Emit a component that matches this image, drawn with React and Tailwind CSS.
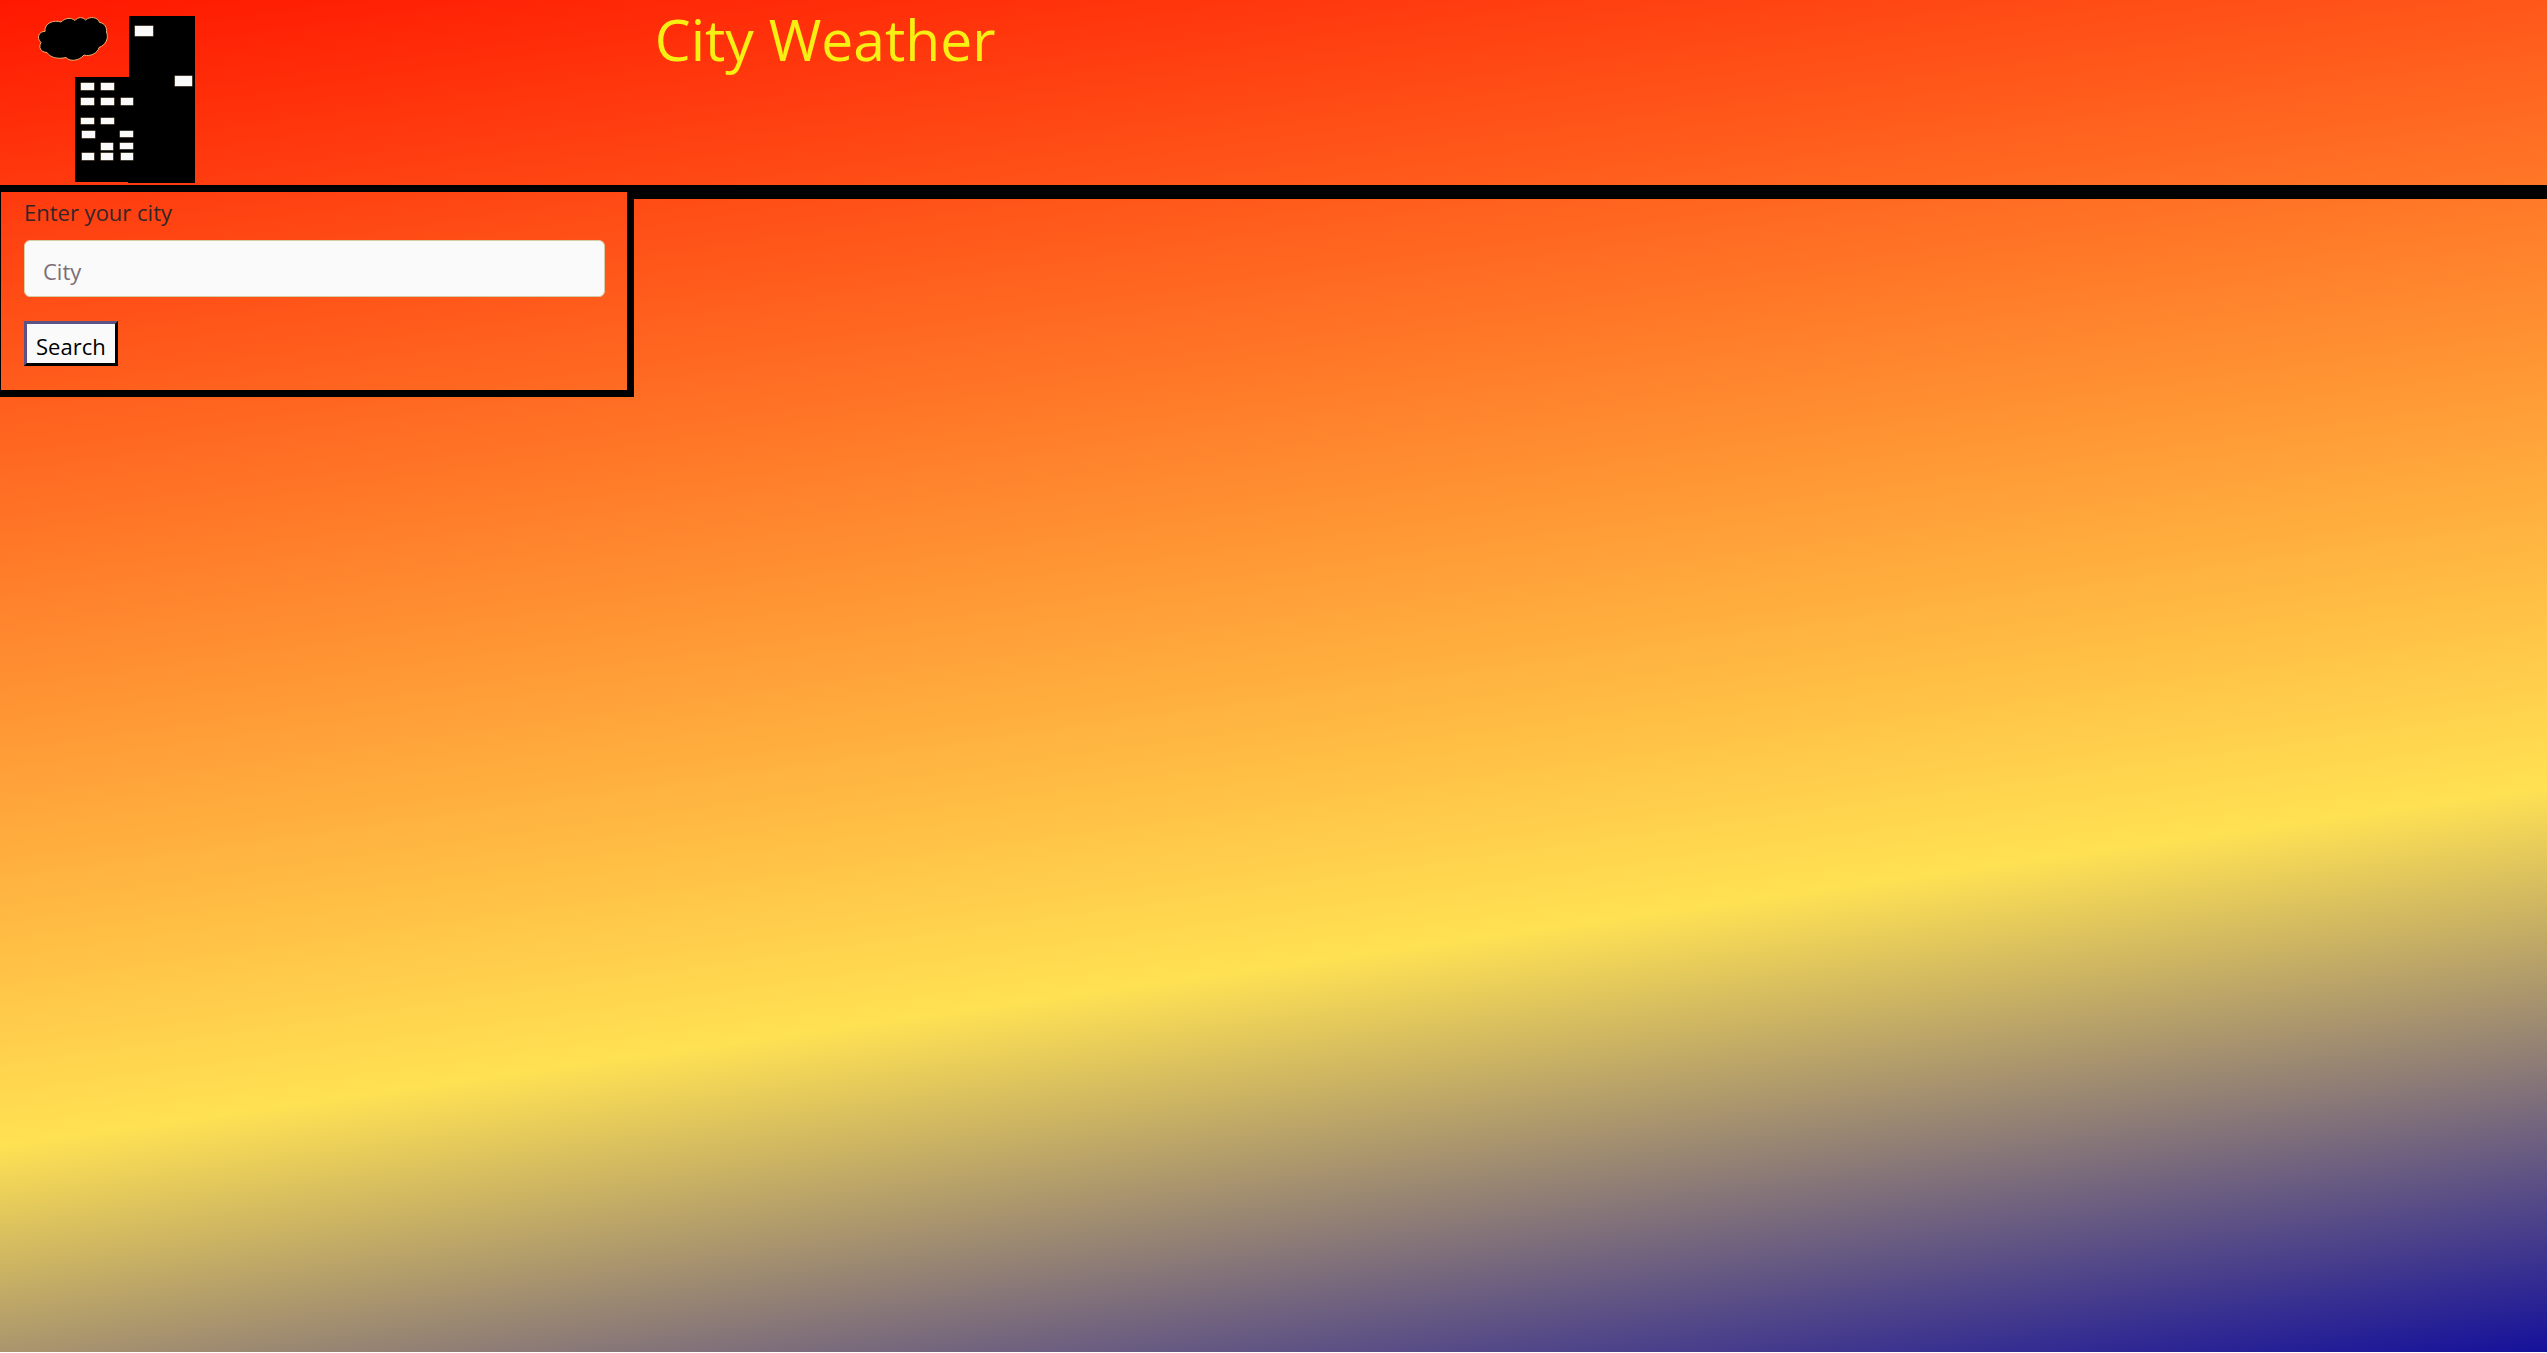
const windowsList = [
  [135, 26, 18, 10],
  [175, 76, 17, 10],
  [81, 83, 13, 7],
  [101, 83, 13, 7],
  [81, 98, 13, 7],
  [101, 98, 13, 7],
  [121, 98, 12, 7],
  [81, 118, 13, 6],
  [101, 118, 13, 6],
  [82, 131, 13, 7],
  [120, 131, 13, 6],
  [101, 143, 12, 7],
  [120, 143, 13, 6],
  [82, 153, 12, 7],
  [101, 153, 12, 7],
  [121, 153, 12, 7],
];

function Logo() {
  return (
    <svg width="200" height="185" viewBox="0 0 200 185" role="img" aria-label="City Weather logo" className="block">
      <path
        d="M45 31.5C44 23 54 19.500 61 22C65 18 71 17 75 20.500C78 16.500 83 17 85.500 20C90 16 98 17 99.500 22.500C105 23 107 28 106.500 32C109 38 106 45 99 47.500C98 53 90 57 84 55C79 61 70 62 66 57.500C58 59.500 50 57.500 47 52.500C40 52 38.500 47 41 42.500C36 38 39 31 45 31.500Z"
        fill="#000"
        stroke="#e8b070"
        strokeWidth="1"
      />
      <path d="M75 77H129V16H195V183H128V182H75Z" fill="#000" />
      {windowsList.map(([x, y, w, h]) => (
        <rect
          key={`${x}-${y}`}
          x={x}
          y={y}
          width={w}
          height={h}
          fill="#fafafa"
          stroke="#8a7d62"
          strokeWidth="1"
          paintOrder="stroke"
        />
      ))}
    </svg>
  );
}

export default function App() {
  return (
    <div className="h-screen bg-white pb-px font-['Open_Sans',sans-serif] text-[22px]">
      <div className="h-full bg-[linear-gradient(172deg,#ff1800_0%,#ffe153_67%,#15119b_100%)]">
        <header className="flex">
          <div className="w-1/4">
            <Logo />
          </div>
          <h1 className="pt-1 pl-[18px] text-[57px] leading-[70px] text-[#f8f013]">City Weather</h1>
        </header>
        <main className="flex items-start">
          <form
            className="w-[24.9%] border-y-[7px] border-r-[7px] border-l border-black pr-[22px] pb-6 pl-[23px]"
            onSubmit={(e) => e.preventDefault()}
          >
            <label htmlFor="city" className="block pt-0.5 leading-9 text-[#33262a]">
              Enter your city
            </label>
            <input
              id="city"
              type="text"
              placeholder="City"
              className="mt-2.5 block h-[57px] w-full rounded-md border border-[#d5cda5] bg-[#fafafa] px-[18px] pt-1 text-black placeholder:text-[#7a6d78]"
            />
            <button
              type="submit"
              className="mt-6 block h-[45px] border-[3px] border-t-[#5b5288] border-r-black border-b-black border-l-[#5b5288] bg-[#fafafa] px-[9px] pt-1 leading-8 text-black"
            >
              Search
            </button>
          </form>
          <section className="grow border-t-[14px] border-black" aria-label="Weather results" />
        </main>
      </div>
    </div>
  );
}
